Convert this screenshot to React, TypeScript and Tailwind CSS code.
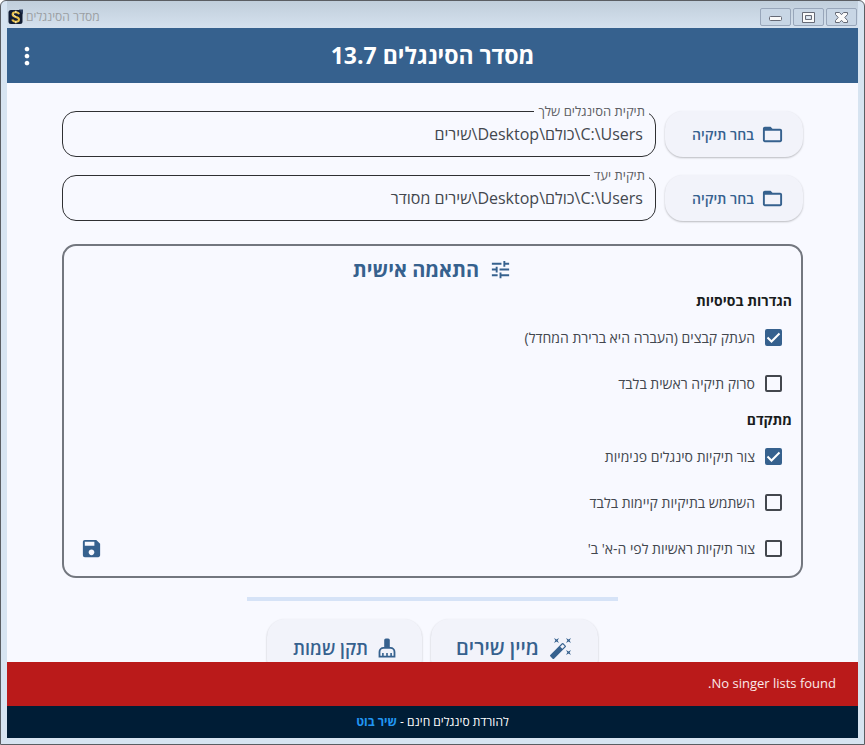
import { useState } from "react";
import { MdAutoFixHigh, MdFolderOpen, MdMoreVert, MdSave, MdTune } from "react-icons/md";

interface IFolderField {
  id: string;
  label: string;
  initial: string;
}

interface IOption {
  id: string;
  label: string;
  checked?: boolean;
}

const basicOptions: IOption[] = [
  { id: "copy", label: "העתק קבצים (העברה היא ברירת המחדל)", checked: true },
  { id: "main-only", label: "סרוק תיקיה ראשית בלבד" },
];

const advancedOptions: IOption[] = [
  { id: "inner", label: "צור תיקיות סינגלים פנימיות", checked: true },
  { id: "existing", label: "השתמש בתיקיות קיימות בלבד" },
];

function AppLogo() {
  return (
    <svg viewBox="0 0 16 16" className="h-4 w-4" aria-hidden="true">
      <rect x="0.5" y="1" width="14" height="14" rx="2.5" fill="#111c33" />
      <path d="M11 0.5h4v5z" fill="#2b3c5c" />
      <path
        d="M11 5.2C10.6 3.8 9.4 3.3 7.8 3.3 6 3.3 4.6 4.1 4.6 5.6c0 3.2 6.4 1.6 6.4 4.8 0 1.5-1.4 2.3-3.3 2.3-1.8 0-3-.7-3.4-2.1"
        fill="none"
        stroke="#e9c24a"
        strokeWidth="2"
      />
      <path d="M7.8 1.8v2M7.8 12v2.2" stroke="#f6e7b0" strokeWidth="1.4" />
      <path d="M5.6 4.8c-.6 1.8 1.2 2.2 2.4 2.7" fill="none" stroke="#fff8de" strokeWidth="0.8" />
    </svg>
  );
}

function BrushIcon({ className }: { className?: string }) {
  return (
    <svg viewBox="0 0 18 20" className={className} fill="currentColor" aria-hidden="true">
      <path d="M6.2 2a1.6 1.6 0 0 1 1.6-1.6h2.4A1.6 1.6 0 0 1 11.8 2v8H6.200z" />
      <path
        fillRule="evenodd"
        d="M5.500 9h7A4.900 4.900 0 0 1 17.400 14v5.500H.6V14A4.900 4.900 0 0 1 5.500 9zM5.600 10.800A3.300 3.300 0 0 0 2.400 14v3.700h1.700V15h1.600v2.700h2.500V15h1.600v2.700h2.500V15h1.600v2.700h1.700V14a3.300 3.300 0 0 0-3.200-3.200z"
      />
    </svg>
  );
}

function WindowButton({ label, children }: { label: string; children: React.ReactNode }) {
  return (
    <button
      type="button"
      aria-label={label}
      className="flex h-[18px] w-[31px] items-center justify-center rounded-[2px] border border-[#98a6ba] bg-[#c8d6e5]"
    >
      <svg viewBox="0 0 15 13" className="h-[13px] w-[15px]" fill="#fafafa" stroke="#666a76" strokeWidth="1">
        {children}
      </svg>
    </button>
  );
}

function TitleBar() {
  return (
    <div
      dir="ltr"
      className="flex h-[27px] items-center justify-between bg-linear-to-b from-[#c0cedb] to-[#d5e1ee]"
    >
      <div className="flex items-center gap-0.5 pt-1 pl-px">
        <AppLogo />
        <span dir="rtl" className="text-[12px] leading-4 text-[#9b9fa3]">
          מסדר הסינגלים
        </span>
      </div>
      <div className="flex gap-0.5 self-end pr-px pb-0.5">
        <WindowButton label="מזער">
          <rect x="1.5" y="5.5" width="12" height="4" rx="1" />
        </WindowButton>
        <WindowButton label="הגדל">
          <path fillRule="evenodd" d="M1.5 1.5h12v10h-12zM4.5 4.5v4h6v-4z" />
          <rect x="5.5" y="5.5" width="4" height="2" fill="#e8eef5" stroke="none" />
        </WindowButton>
        <WindowButton label="סגור">
          <path d="M1.500 1.500h4l2 2.200 2-2.200h4v2L10.800 6.500l2.700 3v2h-4l-2-2.200-2 2.200h-4v-2l2.700-3-2.700-3z" />
        </WindowButton>
      </div>
    </div>
  );
}

function FolderField({ id, label, initial }: IFolderField) {
  const [value, setValue] = useState(initial);

  return (
    <div className="flex items-end gap-[9px]">
      <button
        type="button"
        className="flex h-[46px] w-[138px] shrink-0 items-center gap-[7px] rounded-[18px] bg-[#f2f3fa] pr-[19px] text-[14px] font-semibold text-[#36618e] shadow-[0_1px_2px_rgba(0,0,0,0.25)]"
      >
        <MdFolderOpen className="h-[23px] w-[23px]" />
        בחר תיקיה
      </button>
      <fieldset className="h-[54px] min-w-0 flex-1 rounded-[14px] border border-[#2f3033] px-1.5">
        <legend className="px-1 text-[13px] leading-4 text-[#5d5e64]">
          <label htmlFor={id}>{label}</label>
        </legend>
        <input
          id={id}
          type="text"
          dir="rtl"
          value={value}
          onChange={(e) => setValue(e.target.value)}
          className="block h-[30px] w-full bg-transparent px-1.5 text-[16px] text-[#43474e] outline-none"
        />
      </fieldset>
    </div>
  );
}

function Option({ id, label, checked }: IOption) {
  return (
    <div className="flex h-[46px] items-center gap-2.5 pr-2.5">
      <span className="relative flex h-[17px] w-[17px]">
        <input
          id={id}
          type="checkbox"
          defaultChecked={checked}
          className="peer h-full w-full appearance-none rounded-[2px] border-2 border-[#43474e] checked:border-[#36618e] checked:bg-[#36618e]"
        />
        <svg
          viewBox="0 0 17 17"
          className="pointer-events-none absolute inset-0 hidden peer-checked:block"
          fill="none"
          stroke="#ffffff"
          strokeWidth="2"
        >
          <path d="M2.500 8.500l4 4L14.500 4.500" />
        </svg>
      </span>
      <label htmlFor={id} className="text-[14px] text-[#43474e]">
        {label}
      </label>
    </div>
  );
}

export default function App() {
  return (
    <div
      dir="rtl"
      className="flex h-screen flex-col rounded-t-md border border-[#5b5e63] bg-[#d7e4f1] px-1.5 pb-1.5 font-['Open_Sans','Noto_Sans',sans-serif]"
    >
      <TitleBar />

      <header className="relative flex h-[55px] shrink-0 items-center justify-center bg-[#36618e] text-white">
        <h1 className="text-[23px] font-bold">מסדר הסינגלים 13.7</h1>
        <button type="button" aria-label="תפריט" className="absolute left-1.5">
          <MdMoreVert className="h-7 w-7" />
        </button>
      </header>

      <main className="min-h-0 flex-1 overflow-hidden bg-[#f8f9ff] px-[55px] pt-5">
        <div className="flex flex-col gap-2.5">
          <FolderField id="source" label="תיקית הסינגלים שלך" initial="C:\Users\כולם\Desktop\שירים" />
          <FolderField id="target" label="תיקית יעד" initial="C:\Users\כולם\Desktop\שירים מסודר" />
        </div>

        <section className="mt-[23px] rounded-[14px] border-2 border-[#73777f] px-[9px] pt-1.5 pb-[5px]">
          <h2 className="flex h-[35px] items-center justify-center gap-2.5 text-[20px] font-bold text-[#36618e]">
            <MdTune className="h-[23px] w-[23px]" />
            התאמה אישית
          </h2>
          <h3 className="text-[14px] leading-[27px] font-bold text-[#191c20]">הגדרות בסיסיות</h3>
          {basicOptions.map((option) => (
            <Option key={option.id} {...option} />
          ))}
          <h3 className="text-[14px] leading-[27px] font-bold text-[#191c20]">מתקדם</h3>
          {advancedOptions.map((option) => (
            <Option key={option.id} {...option} />
          ))}
          <div className="flex items-center justify-between pl-[7px]">
            <Option id="alphabet" label="צור תיקיות ראשיות לפי ה-א' ב'" />
            <button type="button" aria-label="שמור" className="text-[#36618e]">
              <MdSave className="h-[23px] w-[23px]" />
            </button>
          </div>
        </section>

        <div className="mx-auto mt-[19px] h-1 w-1/2 bg-[#d6e3f7]" />

        <div className="mt-[18px] flex justify-center gap-[9px] font-semibold text-[#36618e]">
          <button
            type="button"
            className="flex h-[58px] items-center gap-2.5 rounded-[18px] bg-[#f2f3fa] px-[25px] text-[20px] shadow-[0_1px_2px_rgba(0,0,0,0.25)]"
          >
            <MdAutoFixHigh className="h-6 w-6" />
            מיין שירים
          </button>
          <button
            type="button"
            className="flex h-[58px] items-center gap-2.5 rounded-[18px] bg-[#f2f3fa] px-[26px] text-[18px] shadow-[0_1px_2px_rgba(0,0,0,0.25)]"
          >
            <BrushIcon className="h-5 w-[18px]" />
            תקן שמות
          </button>
        </div>
      </main>

      <div role="status" className="flex h-11 shrink-0 items-center bg-[#ba1a1a] px-[22px] text-[13px] text-[#fbe9e9]">
        No singer lists found.
      </div>

      <footer className="flex h-8 shrink-0 items-center justify-center bg-[#001d36] text-[12px] text-white">
        <p>
          להורדת סינגלים חינם -{" "}
          <a href="#" className="font-bold text-[#2196f3]">
            שיר בוט
          </a>
        </p>
      </footer>
    </div>
  );
}
